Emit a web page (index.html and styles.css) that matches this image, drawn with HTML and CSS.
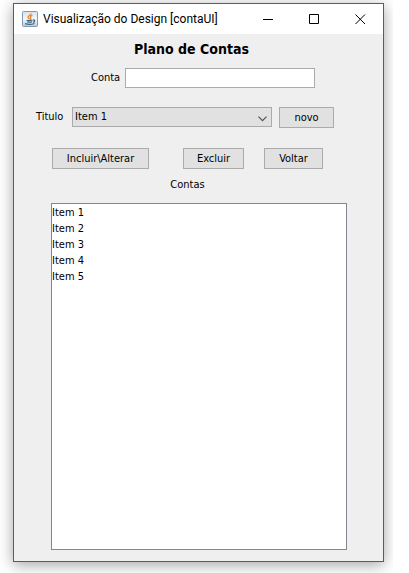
FILE: index.html
```html
<!DOCTYPE html>
<html lang="pt-BR">
<head>
<meta charset="utf-8">
<meta name="viewport" content="width=device-width, initial-scale=1">
<title>Visualização do Design [contaUI]</title>
<link rel="stylesheet" href="styles.css">
</head>
<body>
<div class="desktop">
  <main class="window">
    <header class="titlebar">
      <svg class="app-icon" width="16" height="16" viewBox="0 0 16 16" aria-hidden="true">
        <defs>
          <linearGradient id="tile" x1="0" y1="0" x2="0" y2="1">
            <stop offset="0" stop-color="#d5e0ea"/><stop offset=".5" stop-color="#f6f8fa"/><stop offset="1" stop-color="#b9cbda"/>
          </linearGradient>
        </defs>
        <rect x=".5" y=".5" width="15" height="15" rx="1" fill="url(#tile)" stroke="#8499ad"/>
        <path d="M9 2.500C9.700 4.300 5.500 4.700 6 6.300C6.200 7.200 7.200 7.400 7.400 8.500M10.400 4.400C7.600 5.300 8.300 6.100 8.700 6.800C9 7.400 8.600 8 8.200 8.500" fill="none" stroke="#e8822e" stroke-width="1.300"/>
        <path d="M4.500 9.200Q7 10 10.500 9.200M5.200 10.900Q7.500 11.600 10 10.900M11 9C13.500 8.600 13 10.800 11 11.400M3 12.600Q7.500 14.200 12.500 12.500" fill="none" stroke="#3c6685" stroke-width="1.200"/>
      </svg>
      <span class="caption">Visualização do Design [contaUI]</span>
      <div class="window-controls">
        <button type="button" aria-label="Minimizar"><svg width="11" height="11" viewBox="0 0 11 11"><path d="M0 5.500H10"/></svg></button>
        <button type="button" aria-label="Maximizar"><svg width="11" height="11" viewBox="0 0 11 11"><path d="M.5 .5H9.500V9.500H.5Z"/></svg></button>
        <button type="button" aria-label="Fechar"><svg width="11" height="11" viewBox="0 0 11 11"><path d="M.5 .5L10 10M10 .5L.5 10"/></svg></button>
      </div>
    </header>
    <form class="form">
      <h1>Plano de Contas</h1>
      <div class="row account">
        <label for="conta">Conta</label>
        <input id="conta" type="text">
      </div>
      <div class="row heading">
        <label for="titulo">Titulo</label>
        <div class="combo">
          <select id="titulo">
            <option>Item 1</option><option>Item 2</option><option>Item 3</option><option>Item 4</option>
          </select>
          <svg class="chevron" width="9" height="6" viewBox="0 0 9 6" aria-hidden="true"><path d="M.5 .7L4.500 4.700L8.500 .7"/></svg>
        </div>
        <button type="button" class="btn small">novo</button>
      </div>
      <div class="row actions">
        <button type="button" class="btn save">Incluir\Alterar</button>
        <button type="button" class="btn delete">Excluir</button>
        <button type="button" class="btn back">Voltar</button>
      </div>
      <h2 id="contas">Contas</h2>
      <ul class="list" aria-labelledby="contas">
        <li>Item 1</li><li>Item 2</li><li>Item 3</li><li>Item 4</li><li>Item 5</li>
      </ul>
    </form>
  </main>
</div>
</body>
</html>
```
FILE: styles.css
```css
* { box-sizing: border-box; }

body {
  margin: 0;
  background: #fff;
  color: #000;
  font: 11px/16px "DejaVu Sans Condensed", "Noto Sans", sans-serif;
}

button, input, select { font: inherit; color: inherit; }

.desktop {
  display: flex;
  min-height: 100vh;
  margin-right: 16px;
  padding: 3px 9px 11px 13px;
  overflow: hidden;
}

.window {
  flex: 1;
  display: flex;
  flex-direction: column;
  border: 1px solid #5c5c5c;
  background: #efefef;
  box-shadow: 0 3px 14px rgba(0, 0, 0, .36);
}

.titlebar {
  display: flex;
  align-items: center;
  height: 30px;
  padding-left: 8px;
  background: #fff;
}

.app-icon { margin-right: 5px; }

.caption {
  flex: 1;
  font: 12px/16px Roboto, "Open Sans", sans-serif;
  white-space: nowrap;
}

.window-controls { display: flex; }

.window-controls button {
  display: flex;
  align-items: center;
  justify-content: center;
  width: 46px;
  height: 30px;
  padding: 0;
  border: 0;
  background: none;
}

.window-controls path { fill: none; stroke: #000; }

.form {
  flex: 1;
  display: flex;
  flex-direction: column;
  padding: 4px 36px 11px 37px;
}

h1 {
  margin: 0 15px 8px 0;
  font: bold 14px/22px "DejaVu Sans Condensed", "Noto Sans", sans-serif;
  text-align: center;
}

.row { display: flex; align-items: center; }

.account { gap: 5px; margin: 0 32px 19px 40px; }

.account input {
  flex: 1;
  min-width: 0;
  height: 20px;
  padding: 0 2px;
  border: 1px solid #ababab;
  background: #fff;
}

.heading { align-items: flex-start; margin: 0 13px 20px -15px; }
.heading label { width: 36px; line-height: 20px; }

.combo {
  position: relative;
  flex: 1;
  margin-right: 7px;
}

.combo select {
  display: block;
  width: 100%;
  height: 20px;
  padding: 0 2px;
  border: 1px solid #ababab;
  border-radius: 0;
  background: #e1e1e1;
  appearance: none;
}

.chevron {
  position: absolute;
  top: 9px;
  right: 5px;
  pointer-events: none;
}

.chevron path { fill: none; stroke: #505050; stroke-width: 1.2; }

.btn {
  height: 21px;
  padding: 0;
  border: 1px solid #ababab;
  background: #e1e1e1;
}

.small { width: 55px; }
.save { width: 97px; }
.delete { width: 61px; margin: 0 20px 0 34px; }
.back { width: 59px; }

.actions { padding-left: 1px; margin-bottom: 8px; }

h2 {
  margin: 0 23px 10px 0;
  font: inherit;
  text-align: center;
}

.list {
  flex: 1;
  margin: 0;
  padding: 1px 0 0;
  border: 1px solid #828790;
  background: #fff;
  list-style: none;
}
```
